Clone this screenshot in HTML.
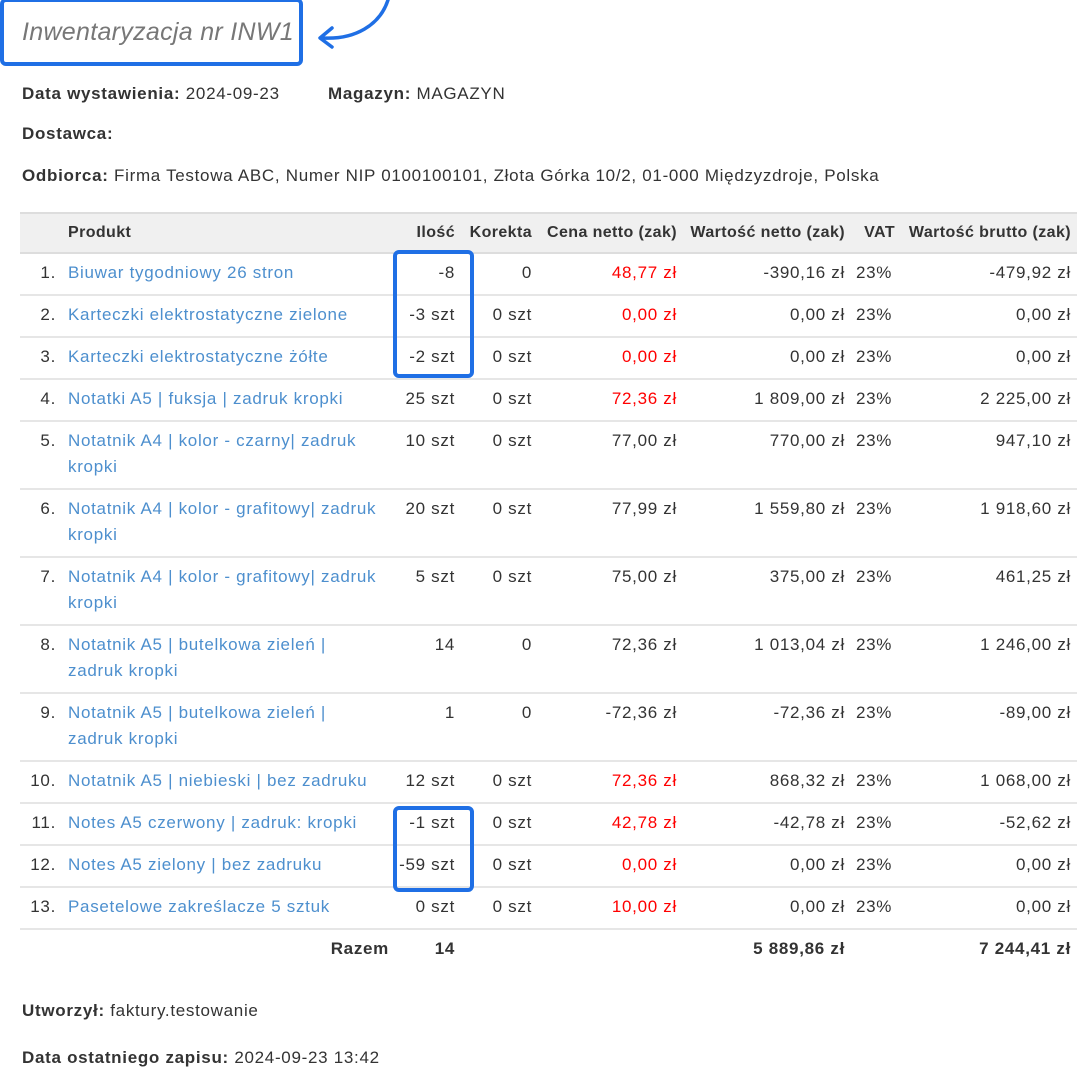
<!DOCTYPE html>
<html><head><meta charset="utf-8">
<style>
body{margin:0;background:#fff;font-family:"Liberation Sans",Arial,sans-serif;color:#333;font-size:17px;letter-spacing:0.7px;width:1091px;height:1080px;position:relative;overflow:hidden}
.t{position:absolute;white-space:nowrap}
b{font-weight:bold}
table{position:absolute;left:20px;top:212px;width:1057px;border-collapse:collapse;table-layout:fixed}
th{background:#f0f0f0;font-weight:bold;font-size:16px;letter-spacing:0.4px;height:38px;border-top:2px solid #ddd;border-bottom:2px solid #ddd;text-align:right;padding:0 6px 0 0;white-space:nowrap}
td{border-bottom:2px solid #e6e6e6;vertical-align:top;padding:6px 6px 0 0;text-align:right;line-height:26px;white-space:nowrap}
td.p{text-align:left;padding-left:6px;color:#4d8fce;white-space:normal}
tr.s td{height:34px}
tr.d td{height:60px}
.r{color:#f00}
tr.tot td{border-bottom:none;font-weight:bold}
.box{position:absolute;border:4px solid #1f6fe5;border-radius:6px}
.v{text-align:left!important;padding-left:5px!important}
</style></head><body>
<div class="box" style="left:0;top:-2px;width:295px;height:60px"></div>
<div class="t" style="left:22px;top:18px;font-size:25px;letter-spacing:0.3px;font-style:italic;color:#777">Inwentaryzacja nr INW1</div>
<svg style="position:absolute;left:310px;top:0" width="90" height="60"><path d="M78 0 C70 25 45 40 12 38" fill="none" stroke="#1f6fe5" stroke-width="3.5" stroke-linecap="round"/><path d="M22 28 L10 38 L22 47" fill="none" stroke="#1f6fe5" stroke-width="3.5" stroke-linecap="round" stroke-linejoin="round"/></svg>
<div class="t" style="left:22px;top:84px"><b>Data wystawienia:</b> 2024-09-23</div>
<div class="t" style="left:328px;top:84px"><b>Magazyn:</b> MAGAZYN</div>
<div class="t" style="left:22px;top:124px"><b>Dostawca:</b></div>
<div class="t" style="left:22px;top:166px"><b>Odbiorca:</b> Firma Testowa ABC, Numer NIP 0100100101, Złota Górka 10/2, 01-000 Międzyzdroje, Polska</div>
<table>
<colgroup><col style="width:42px"><col style="width:333px"><col style="width:66px"><col style="width:77px"><col style="width:145px"><col style="width:168px"><col style="width:50px"><col style="width:176px"></colgroup>
<tr><th></th><th style="text-align:left;padding-left:6px">Produkt</th><th>Ilość</th><th>Korekta</th><th>Cena netto (zak)</th><th>Wartość netto (zak)</th><th>VAT</th><th>Wartość brutto (zak)</th></tr>
<tr class="s"><td>1.</td><td class="p">Biuwar tygodniowy 26 stron</td><td>-8</td><td>0</td><td class="r">48,77 zł</td><td>-390,16 zł</td><td class="v">23%</td><td>-479,92 zł</td></tr>
<tr class="s"><td>2.</td><td class="p">Karteczki elektrostatyczne zielone</td><td>-3 szt</td><td>0 szt</td><td class="r">0,00 zł</td><td>0,00 zł</td><td class="v">23%</td><td>0,00 zł</td></tr>
<tr class="s"><td>3.</td><td class="p">Karteczki elektrostatyczne żółte</td><td>-2 szt</td><td>0 szt</td><td class="r">0,00 zł</td><td>0,00 zł</td><td class="v">23%</td><td>0,00 zł</td></tr>
<tr class="s"><td>4.</td><td class="p">Notatki A5 | fuksja | zadruk kropki</td><td>25 szt</td><td>0 szt</td><td class="r">72,36 zł</td><td>1 809,00 zł</td><td class="v">23%</td><td>2 225,00 zł</td></tr>
<tr class="d"><td>5.</td><td class="p">Notatnik A4 | kolor - czarny| zadruk<br>kropki</td><td>10 szt</td><td>0 szt</td><td>77,00 zł</td><td>770,00 zł</td><td class="v">23%</td><td>947,10 zł</td></tr>
<tr class="d"><td>6.</td><td class="p">Notatnik A4 | kolor - grafitowy| zadruk<br>kropki</td><td>20 szt</td><td>0 szt</td><td>77,99 zł</td><td>1 559,80 zł</td><td class="v">23%</td><td>1 918,60 zł</td></tr>
<tr class="d"><td>7.</td><td class="p">Notatnik A4 | kolor - grafitowy| zadruk<br>kropki</td><td>5 szt</td><td>0 szt</td><td>75,00 zł</td><td>375,00 zł</td><td class="v">23%</td><td>461,25 zł</td></tr>
<tr class="d"><td>8.</td><td class="p">Notatnik A5 | butelkowa zieleń |<br>zadruk kropki</td><td>14</td><td>0</td><td>72,36 zł</td><td>1 013,04 zł</td><td class="v">23%</td><td>1 246,00 zł</td></tr>
<tr class="d"><td>9.</td><td class="p">Notatnik A5 | butelkowa zieleń |<br>zadruk kropki</td><td>1</td><td>0</td><td>-72,36 zł</td><td>-72,36 zł</td><td class="v">23%</td><td>-89,00 zł</td></tr>
<tr class="s"><td>10.</td><td class="p">Notatnik A5 | niebieski | bez zadruku</td><td>12 szt</td><td>0 szt</td><td class="r">72,36 zł</td><td>868,32 zł</td><td class="v">23%</td><td>1 068,00 zł</td></tr>
<tr class="s"><td>11.</td><td class="p">Notes A5 czerwony | zadruk: kropki</td><td>-1 szt</td><td>0 szt</td><td class="r">42,78 zł</td><td>-42,78 zł</td><td class="v">23%</td><td>-52,62 zł</td></tr>
<tr class="s"><td>12.</td><td class="p">Notes A5 zielony | bez zadruku</td><td>-59 szt</td><td>0 szt</td><td class="r">0,00 zł</td><td>0,00 zł</td><td class="v">23%</td><td>0,00 zł</td></tr>
<tr class="s"><td>13.</td><td class="p">Pasetelowe zakreślacze 5 sztuk</td><td>0 szt</td><td>0 szt</td><td class="r">10,00 zł</td><td>0,00 zł</td><td class="v">23%</td><td>0,00 zł</td></tr>
<tr class="s tot"><td></td><td style="text-align:right">Razem</td><td>14</td><td></td><td></td><td>5 889,86 zł</td><td></td><td>7 244,41 zł</td></tr>
</table>
<div class="box" style="left:393px;top:250px;width:73px;height:120px"></div>
<div class="box" style="left:393px;top:806px;width:73px;height:78px"></div>
<div class="t" style="left:22px;top:1001px"><b>Utworzył:</b> faktury.testowanie</div>
<div class="t" style="left:22px;top:1048px"><b>Data ostatniego zapisu:</b> 2024-09-23 13:42</div>
</body></html>
